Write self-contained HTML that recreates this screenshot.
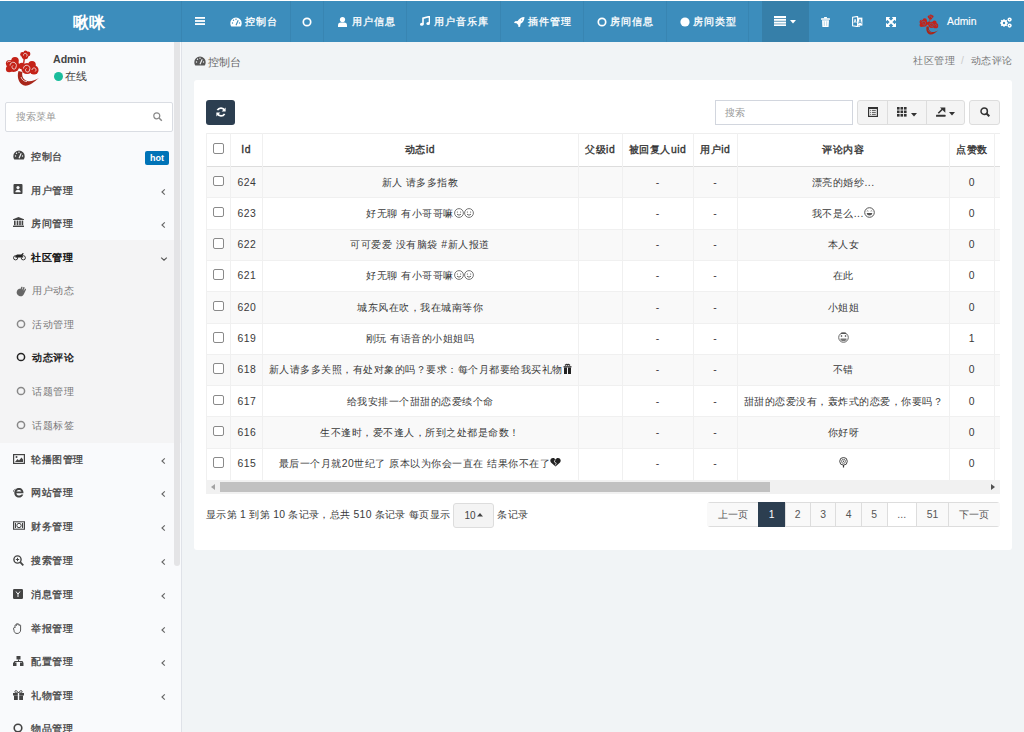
<!DOCTYPE html>
<html><head><meta charset="utf-8">
<style>
*{box-sizing:border-box;margin:0;padding:0}
html,body{width:1024px;height:732px;overflow:hidden;background:#f1f4f6;font-family:"Liberation Sans",sans-serif;color:#333}
.abs{position:absolute}
svg.abs{display:block}
#topline{position:absolute;left:0;top:0;width:1024px;height:1px;background:#fff}
#header{position:absolute;left:0;top:1px;width:1024px;height:41px;background:#3c8dbc;color:#fff;font-size:11.2px}
.nt{-webkit-text-stroke:0.3px #fff}
#logo{position:absolute;left:0;top:1px;width:178px;height:41px;text-align:center;line-height:41px;font-size:16px;font-weight:bold}
.sep{position:absolute;top:0;width:1px;height:41px;background:rgba(0,0,0,0.05)}
.nt{position:absolute;top:0;height:41px;line-height:41px;white-space:nowrap;font-size:10.4px;letter-spacing:0.9px}
#sidebar{position:absolute;left:0;top:42px;width:181px;height:690px;background:#f9fafc;overflow:hidden}
#sbborder{position:absolute;left:181px;top:42px;width:1px;height:690px;background:#dfe2e8}
#sbthumb{position:absolute;left:174px;top:42px;width:6px;height:524px;background:#e4e4e6;border-radius:0 0 4px 4px}
.mi{position:absolute;left:0;width:174px;height:34px;font-size:10.4px;letter-spacing:0.5px;color:#444;font-weight:normal;-webkit-text-stroke:0.3px #444;white-space:nowrap}
.mi .tx{position:absolute;left:31px;top:0.5px;line-height:34px}
.si{position:absolute;left:0;width:174px;height:34px;font-size:10.4px;letter-spacing:0.5px;color:#777;white-space:nowrap}
.si .tx{position:absolute;left:32px;top:0.7px;line-height:34px}
#panel{position:absolute;left:194px;top:80px;width:818px;height:470px;background:#fff;border-radius:3px}
.th{position:absolute;font-size:10.4px;letter-spacing:0.5px;color:#333;font-weight:normal;-webkit-text-stroke:0.35px #333;text-align:center;white-space:nowrap}
.td{position:absolute;font-size:10.4px;letter-spacing:0.5px;color:#3a3a3a;text-align:center;white-space:nowrap}
.cell{position:absolute;font-size:10.4px;color:#333;white-space:nowrap;text-align:center}
</style></head><body>
<div id="topline"></div>
<div id="header">
<div id="logo">啾咪</div>
<div class="sep" style="left:181px"></div>
<div class="sep" style="left:290px"></div>
<div class="sep" style="left:323px"></div>
<div class="sep" style="left:406px"></div>
<div class="sep" style="left:500px"></div>
<div class="sep" style="left:583px"></div>
<div class="sep" style="left:666px"></div>
<div class="sep" style="left:748px"></div>
<div class="abs" style="left:762px;top:0;width:47px;height:41px;background:#367fa9"></div>
<svg class="abs" style="left:194.5px;top:16.2px" width="10" height="8" viewBox="0 0 10 8" ><rect x="0" y="0" width="10" height="1.8" fill="#fff"/><rect x="0" y="3.1" width="10" height="1.8" fill="#fff"/><rect x="0" y="6.2" width="10" height="1.8" fill="#fff"/></svg>
<svg class="abs" style="left:230px;top:15.5px" width="12" height="10" viewBox="0 0 12 10" ><path d="M6 0.5A5.7 5.7 0 0 0 0.3 6.2c0 1.2.3 2.3 1 3.3h9.4c.7-1 1-2.1 1-3.3A5.7 5.7 0 0 0 6 0.5z" fill="#fff"/><path d="M6 8.2 8.2 3.2" stroke="#3c8dbc" stroke-width="1.1"/><circle cx="2.5" cy="6" r=".7" fill="#3c8dbc"/><circle cx="3.5" cy="3.3" r=".7" fill="#3c8dbc"/><circle cx="6" cy="2.2" r=".7" fill="#3c8dbc"/><circle cx="9.5" cy="6" r=".7" fill="#3c8dbc"/></svg>
<div class="nt" style="left:245px">控制台</div>
<svg class="abs" style="left:301.5px;top:15.5px" width="10" height="10" viewBox="0 0 10 10" ><circle cx="5" cy="5" r="3.7" fill="none" stroke="#fff" stroke-width="1.7"/></svg>
<svg class="abs" style="left:338.2px;top:15.6px" width="9" height="10" viewBox="0 0 9 10" ><circle cx="4.5" cy="2.6" r="2.6" fill="#fff"/><path d="M0 10V8.2C0 6.3 1.5 5.6 2.6 5.6h3.8C7.5 5.6 9 6.3 9 8.2V10z" fill="#fff"/></svg>
<div class="nt" style="left:352px">用户信息</div>
<svg class="abs" style="left:420px;top:15px" width="10" height="10" viewBox="0 0 10 10" ><path d="M3 8V2.2L9.5 0.5V7" stroke="#fff" stroke-width="1.6" fill="none"/><ellipse cx="1.8" cy="8.2" rx="1.8" ry="1.5" fill="#fff"/><ellipse cx="8.2" cy="7.4" rx="1.8" ry="1.5" fill="#fff"/></svg>
<div class="nt" style="left:434px">用户音乐库</div>
<svg class="abs" style="left:513.5px;top:15.5px" width="11" height="10" viewBox="0 0 11 10" ><path d="M10.5 0C7.2 0 5 1.8 3.7 3.9L1 4.3 0 6l2.5.3L4.2 8l.3 2.5 1.7-1L6.6 6.8C8.8 5.5 10.5 3.3 10.5 0z" fill="#fff"/><circle cx="7.6" cy="3" r=".6" fill="#3c8dbc"/></svg>
<div class="nt" style="left:528px">插件管理</div>
<svg class="abs" style="left:596.5px;top:15.5px" width="10" height="10" viewBox="0 0 10 10" ><circle cx="5" cy="5" r="3.7" fill="none" stroke="#fff" stroke-width="1.7"/></svg>
<div class="nt" style="left:610px">房间信息</div>
<svg class="abs" style="left:680px;top:15.5px" width="10" height="10" viewBox="0 0 10 10" ><circle cx="5" cy="5" r="4.6" fill="#fff"/></svg>
<div class="nt" style="left:693px">房间类型</div>
<svg class="abs" style="left:774px;top:15px" width="12" height="10" viewBox="0 0 12 10" ><rect x="0" y="0" width="12" height="2" fill="#fff"/><rect x="0" y="2.8" width="12" height="2" fill="#fff"/><rect x="0" y="5.6" width="12" height="2" fill="#fff"/><rect x="0" y="8.3" width="12" height="1.7" fill="#fff"/></svg>
<svg class="abs" style="left:790px;top:19px" width="6" height="4" viewBox="0 0 6 4" ><path d="M0 0H6L3 3.5z" fill="#fff"/></svg>
<svg class="abs" style="left:820.5px;top:15.5px" width="9" height="10" viewBox="0 0 9 10" ><rect x="0" y="1.2" width="9" height="1.5" rx=".5" fill="#fff"/><rect x="3" y="0" width="3" height="1.6" rx=".5" fill="#fff"/><path d="M1 3.2h7l-.4 6.8h-6.2z" fill="#fff"/><path d="M3.3 4.3v4.6M5.7 4.3v4.6" stroke="#3c8dbc" stroke-width=".6" opacity=".6"/></svg>
<svg class="abs" style="left:852px;top:15px" width="11" height="11" viewBox="0 0 11 11" ><path d="M0.6 1.2 5.6 0.4v10.2L0.6 9.8z" fill="none" stroke="#fff" stroke-width="1.1"/><path d="M5.6 1.6h4.8v8h-4.8z" fill="#fff"/><path d="M2 6.8 3.1 3.2 4.2 6.8M2.4 5.8h1.4" stroke="#fff" stroke-width=".8" fill="none"/><path d="M6.6 7.6 8 3.3 9.4 7.6M7 6.4h2" stroke="#3c8dbc" stroke-width=".8" fill="none"/><path d="M4 10.6h4" stroke="#fff" stroke-width=".8"/></svg>
<svg class="abs" style="left:885.5px;top:16px" width="10" height="10" viewBox="0 0 10 10" ><path d="M0 0H4.3L0 4.3zM10 0V4.3L5.7 0zM0 10V5.7L4.3 10zM10 10H5.7L10 5.7z" fill="#fff"/><path d="M1.5 1.5 8.5 8.5M8.5 1.5 1.5 8.5" stroke="#fff" stroke-width="1.9"/></svg>
<svg class="abs" style="left:919px;top:13px" width="20" height="21" viewBox="0 0 35 36" ><g fill="#c42218"><circle cx="20" cy="6" r="3.3"/><circle cx="17.5" cy="4.4" r="2.3"/><circle cx="23" cy="4" r="2.4"/><circle cx="20.5" cy="2.4" r="2"/><path d="M19.5 8.5C18.5 10 19.5 11.5 18.5 13" stroke="#c42218" stroke-width="1.4" fill="none"/><circle cx="8.5" cy="16" r="6"/><circle cx="4.5" cy="13.5" r="3.6"/><circle cx="10" cy="10.8" r="3.8"/><circle cx="4.2" cy="19" r="3.3"/><circle cx="22" cy="18.5" r="5.5"/><circle cx="29" cy="20" r="4.6"/><circle cx="27" cy="14.8" r="3.8"/><circle cx="17" cy="16" r="3.3"/><path d="M13.5 21C11.5 27 14 34 19 35.5 24 36.5 29 32 34 28 30 30 26 32 22 31 17.5 29.5 16.5 25 17.5 22z" fill="#a8261a"/></g><g fill="none" stroke="#3c8dbc" stroke-width=".9" opacity=".85"><path d="M5 15.5a3.2 3.2 0 1 1 6 1.5 2 2 0 1 1-3-1.6"/><path d="M18.5 18.5a3.2 3.2 0 1 1 6 1.5 2 2 0 1 1-3-1.6"/><path d="M18.5 5.5a1.8 1.8 0 1 1 3 1"/><path d="M27 20a2 2 0 1 1 3.2 1.5"/><path d="M16 27c1 3 3 4.5 6 4.5"/><path d="M2.5 12.5a2 2 0 0 1 3-1"/></g></svg>
<div class="nt" style="left:947px;font-size:10.4px;letter-spacing:0;-webkit-text-stroke:0.15px #fff">Admin</div>
<svg class="abs" style="left:1000px;top:16px" width="12" height="11" viewBox="0 0 12 11" ><g fill="#fff"><circle cx="4" cy="6" r="3.1"/><g stroke="#fff" stroke-width="1.5"><path d="M4 2.2v7.6M.2 6h7.6M1.3 3.3l5.4 5.4M1.3 8.7l5.4-5.4"/></g><circle cx="9.6" cy="2.6" r="2.1"/><circle cx="9.6" cy="8.6" r="2.1"/></g><circle cx="4" cy="6" r="1.2" fill="#3c8dbc"/><circle cx="9.6" cy="2.6" r=".6" fill="#3c8dbc"/><circle cx="9.6" cy="8.6" r=".6" fill="#3c8dbc"/></svg>
</div>
<div id="sidebar">
<div class="abs" style="left:0;top:198px;width:181px;height:203px;background:#f4f4f5"></div>
<svg class="abs" style="left:5px;top:8px" width="35" height="36" viewBox="0 0 35 36" ><g fill="#c42218"><circle cx="20" cy="6" r="3.3"/><circle cx="17.5" cy="4.4" r="2.3"/><circle cx="23" cy="4" r="2.4"/><circle cx="20.5" cy="2.4" r="2"/><path d="M19.5 8.5C18.5 10 19.5 11.5 18.5 13" stroke="#c42218" stroke-width="1.4" fill="none"/><circle cx="8.5" cy="16" r="6"/><circle cx="4.5" cy="13.5" r="3.6"/><circle cx="10" cy="10.8" r="3.8"/><circle cx="4.2" cy="19" r="3.3"/><circle cx="22" cy="18.5" r="5.5"/><circle cx="29" cy="20" r="4.6"/><circle cx="27" cy="14.8" r="3.8"/><circle cx="17" cy="16" r="3.3"/><path d="M13.5 21C11.5 27 14 34 19 35.5 24 36.5 29 32 34 28 30 30 26 32 22 31 17.5 29.5 16.5 25 17.5 22z" fill="#a8261a"/></g><g fill="none" stroke="#f9fafc" stroke-width=".9" opacity=".85"><path d="M5 15.5a3.2 3.2 0 1 1 6 1.5 2 2 0 1 1-3-1.6"/><path d="M18.5 18.5a3.2 3.2 0 1 1 6 1.5 2 2 0 1 1-3-1.6"/><path d="M18.5 5.5a1.8 1.8 0 1 1 3 1"/><path d="M27 20a2 2 0 1 1 3.2 1.5"/><path d="M16 27c1 3 3 4.5 6 4.5"/><path d="M2.5 12.5a2 2 0 0 1 3-1"/></g></svg>
<div class="abs" style="left:53px;top:10.5px;font-size:10.6px;font-weight:bold;color:#444">Admin</div>
<div class="abs" style="left:53.5px;top:29.8px;width:9px;height:9px;border-radius:50%;background:#1abc9c"></div>
<div class="abs" style="left:65px;top:27px;font-size:11.2px;color:#444">在线</div>
<div class="abs" style="left:5px;top:60px;width:168px;height:30px;background:#fff;border:1px solid #dadde3;border-radius:2px"></div>
<div class="abs" style="left:16px;top:68px;font-size:10.4px;color:#999">搜索菜单</div>
<svg class="abs" style="left:152.5px;top:70px" width="10" height="10" viewBox="0 0 10 10" ><circle cx="3.8" cy="3.8" r="3" fill="none" stroke="#888" stroke-width="1.2"/><path d="M6 6 8.8 8.8" stroke="#888" stroke-width="1.5"/></svg>
<div class="mi" style="top:97px"><div class="tx">控制台</div></div>
<svg class="abs" style="left:13px;top:108px" width="12" height="10" viewBox="0 0 12 10" ><path d="M6 0.5A5.7 5.7 0 0 0 0.3 6.2c0 1.2.3 2.3 1 3.3h9.4c.7-1 1-2.1 1-3.3A5.7 5.7 0 0 0 6 0.5z" fill="#444"/><path d="M6 8.2 8.2 3.2" stroke="#f9fafc" stroke-width="1.1"/><circle cx="2.5" cy="6" r=".7" fill="#f9fafc"/><circle cx="3.5" cy="3.3" r=".7" fill="#f9fafc"/><circle cx="6" cy="2.2" r=".7" fill="#f9fafc"/><circle cx="9.5" cy="6" r=".7" fill="#f9fafc"/></svg>
<div class="abs" style="left:145px;top:108.8px;width:24px;height:14px;background:#0073b7;color:#fff;font-size:9px;font-weight:bold;text-align:center;line-height:14px;border-radius:2px">hot</div>
<div class="mi" style="top:131px"><div class="tx">用户管理</div></div>
<svg class="abs" style="left:13px;top:142px" width="10" height="10" viewBox="0 0 10 10" ><rect x="0.5" y="0" width="9" height="10" rx="1" fill="#444"/><circle cx="5" cy="3.6" r="1.6" fill="#f9fafc"/><path d="M2.3 8.3c0-1.6 1.2-2.5 2.7-2.5s2.7.9 2.7 2.5z" fill="#f9fafc"/></svg>
<svg class="abs" style="left:160px;top:145.5px" width="6" height="8" viewBox="0 0 6 8" ><path d="M4.8 1.4 2 4 4.8 6.6" stroke="#666" stroke-width="1.15" fill="none"/></svg>
<div class="mi" style="top:164px"><div class="tx">房间管理</div></div>
<svg class="abs" style="left:13px;top:175px" width="11" height="10" viewBox="0 0 11 10" ><path d="M5.5 0 11 2.2V3H0V2.2z" fill="#444"/><rect x="1" y="3.6" width="1.6" height="4.6" fill="#444"/><rect x="3.7" y="3.6" width="1.6" height="4.6" fill="#444"/><rect x="6.2" y="3.6" width="1.6" height="4.6" fill="#444"/><rect x="8.6" y="3.6" width="1.6" height="4.6" fill="#444"/><rect x="0" y="8.6" width="11" height="1.4" fill="#444"/></svg>
<svg class="abs" style="left:160px;top:178.5px" width="6" height="8" viewBox="0 0 6 8" ><path d="M4.8 1.4 2 4 4.8 6.6" stroke="#666" stroke-width="1.15" fill="none"/></svg>
<div class="mi" style="top:198px;color:#111;-webkit-text-stroke:0.45px #111"><div class="tx">社区管理</div></div>
<svg class="abs" style="left:13px;top:209.5px" width="13" height="9" viewBox="0 0 13 9" ><circle cx="2.6" cy="5.8" r="2.1" fill="none" stroke="#222" stroke-width=".9"/><circle cx="10.3" cy="5.8" r="2.1" fill="none" stroke="#222" stroke-width=".9"/><path d="M2.2 4.2 4 2.4h4.2L9.8 1l1 .6L9.4 3.4 10.3 5.8 8.5 5.2 6.8 5.6H4.8L2.6 5.8z" fill="#222"/></svg>
<svg class="abs" style="left:159.5px;top:214px" width="8" height="6" viewBox="0 0 8 6" ><path d="M1.2 1.6 4 4.2 6.8 1.6" stroke="#555" stroke-width="1.15" fill="none"/></svg>
<div class="si" style="top:231px;color:#777;font-weight:normal"><div class="tx">用户动态</div></div>
<svg class="abs" style="left:16px;top:243.5px" width="11" height="11" viewBox="0 0 11 11" ><g transform="rotate(25 5.5 5.5)"><path d="M1.2 6.8C1.2 4.5 2.5 3.6 3.4 3.6V1.6C3.4.6 4.8.6 4.8 1.6V3.4h.6V1.2c0-1 1.4-1 1.4 0v2.3h.6V2c0-1 1.4-1 1.4 0v4.8C8.8 9.2 7.4 10.5 5.3 10.5 2.8 10.5 1.2 9.2 1.2 6.8z" fill="#666"/></g></svg>
<div class="si" style="top:265px;color:#777;font-weight:normal"><div class="tx">活动管理</div></div>
<svg class="abs" style="left:16px;top:277px" width="10" height="10" viewBox="0 0 10 10" ><circle cx="5" cy="5" r="3.6" fill="none" stroke="#888" stroke-width="1.5"/></svg>
<div class="si" style="top:298px;color:#222;font-weight:bold"><div class="tx">动态评论</div></div>
<svg class="abs" style="left:16px;top:310px" width="10" height="10" viewBox="0 0 10 10" ><circle cx="5" cy="5" r="3.6" fill="none" stroke="#222" stroke-width="1.5"/></svg>
<div class="si" style="top:332px;color:#777;font-weight:normal"><div class="tx">话题管理</div></div>
<svg class="abs" style="left:16px;top:344px" width="10" height="10" viewBox="0 0 10 10" ><circle cx="5" cy="5" r="3.6" fill="none" stroke="#888" stroke-width="1.5"/></svg>
<div class="si" style="top:366px;color:#777;font-weight:normal"><div class="tx">话题标签</div></div>
<svg class="abs" style="left:16px;top:378px" width="10" height="10" viewBox="0 0 10 10" ><circle cx="5" cy="5" r="3.6" fill="none" stroke="#888" stroke-width="1.5"/></svg>
<div class="mi" style="top:400px"><div class="tx">轮播图管理</div></div>
<svg class="abs" style="left:13px;top:412px" width="12" height="10" viewBox="0 0 12 10" ><rect x=".6" y=".6" width="10.8" height="8.8" fill="none" stroke="#444" stroke-width="1.2"/><path d="M2 8 4.5 5l1.5 1.5L8.5 3.5 10 5.5V8z" fill="#444"/><circle cx="3.5" cy="3" r="1" fill="#444"/></svg>
<svg class="abs" style="left:160px;top:415px" width="6" height="8" viewBox="0 0 6 8" ><path d="M4.8 1.4 2 4 4.8 6.6" stroke="#666" stroke-width="1.15" fill="none"/></svg>
<div class="mi" style="top:433px"><div class="tx">网站管理</div></div>
<svg class="abs" style="left:13px;top:445px" width="11" height="11" viewBox="0 0 11 11" ><path d="M10.5 6.2H3.4C3.5 7.8 4.6 8.6 6 8.6 7 8.6 7.9 8.1 8.4 7.4H10.3C9.6 9.3 7.9 10.6 6 10.6 3.3 10.6 1.3 8.5 1.3 5.8 1.3 3.1 3.3 1 6 1 8.7 1 10.6 3 10.5 6.2zM3.5 4.6H8.4C8.2 3.5 7.3 2.9 6 2.9 4.7 2.9 3.8 3.5 3.5 4.6z" fill="#444"/><path d="M2.5 2.2C0 3 -.5 5.5.8 4.2" stroke="#444" stroke-width=".7" fill="none"/></svg>
<svg class="abs" style="left:160px;top:448px" width="6" height="8" viewBox="0 0 6 8" ><path d="M4.8 1.4 2 4 4.8 6.6" stroke="#666" stroke-width="1.15" fill="none"/></svg>
<div class="mi" style="top:467px"><div class="tx">财务管理</div></div>
<svg class="abs" style="left:13px;top:479px" width="12" height="9" viewBox="0 0 12 9" ><rect x=".5" y=".8" width="11" height="7.4" fill="none" stroke="#444" stroke-width="1.1"/><circle cx="6" cy="4.5" r="2.2" fill="none" stroke="#444" stroke-width="1"/><rect x="1.8" y="2" width="1.2" height="5" fill="#444"/><rect x="9" y="2" width="1.2" height="5" fill="#444"/></svg>
<svg class="abs" style="left:160px;top:482px" width="6" height="8" viewBox="0 0 6 8" ><path d="M4.8 1.4 2 4 4.8 6.6" stroke="#666" stroke-width="1.15" fill="none"/></svg>
<div class="mi" style="top:501px"><div class="tx">搜索管理</div></div>
<svg class="abs" style="left:13px;top:513px" width="11" height="11" viewBox="0 0 11 11" ><circle cx="4.5" cy="4.5" r="3.6" fill="none" stroke="#444" stroke-width="1.4"/><path d="M7.2 7.2 10.3 10.3" stroke="#444" stroke-width="1.8"/><path d="M4.5 2.8v3.4M2.8 4.5h3.4" stroke="#444" stroke-width="1"/></svg>
<svg class="abs" style="left:160px;top:516px" width="6" height="8" viewBox="0 0 6 8" ><path d="M4.8 1.4 2 4 4.8 6.6" stroke="#666" stroke-width="1.15" fill="none"/></svg>
<div class="mi" style="top:535px"><div class="tx">消息管理</div></div>
<svg class="abs" style="left:13px;top:547px" width="10" height="10" viewBox="0 0 10 10" ><rect x="0" y="0" width="10" height="10" rx="1.2" fill="#444"/><path d="M3 2.5 5 5.2 7 2.5M5 5.2V8" stroke="#f9fafc" stroke-width="1" fill="none"/></svg>
<svg class="abs" style="left:160px;top:550px" width="6" height="8" viewBox="0 0 6 8" ><path d="M4.8 1.4 2 4 4.8 6.6" stroke="#666" stroke-width="1.15" fill="none"/></svg>
<div class="mi" style="top:569px"><div class="tx">举报管理</div></div>
<svg class="abs" style="left:13px;top:581px" width="10" height="11" viewBox="0 0 10 11" ><path d="M2 5V2.5c0-.9 1.4-.9 1.4 0V1.2c0-.9 1.4-.9 1.4 0v.5c0-.9 1.4-.9 1.4 0v.8c0-.9 1.4-.9 1.4 0V7c0 2-1.5 3.5-3.5 3.5S1 9 1 7.3L.5 5.5C.3 4.6 1.7 4.3 2 5z" fill="none" stroke="#444" stroke-width=".9"/></svg>
<svg class="abs" style="left:160px;top:584px" width="6" height="8" viewBox="0 0 6 8" ><path d="M4.8 1.4 2 4 4.8 6.6" stroke="#666" stroke-width="1.15" fill="none"/></svg>
<div class="mi" style="top:602px"><div class="tx">配置管理</div></div>
<svg class="abs" style="left:13px;top:614px" width="11" height="10" viewBox="0 0 11 10" ><rect x="3.5" y="0" width="4" height="3.5" fill="#444"/><path d="M5.5 3.5V5.5M1.5 7V5.5h8V7" stroke="#444" stroke-width="1" fill="none"/><rect x="0" y="6.5" width="3.5" height="3.5" fill="#444"/><rect x="7" y="6.5" width="3.5" height="3.5" fill="#444"/></svg>
<svg class="abs" style="left:160px;top:617px" width="6" height="8" viewBox="0 0 6 8" ><path d="M4.8 1.4 2 4 4.8 6.6" stroke="#666" stroke-width="1.15" fill="none"/></svg>
<div class="mi" style="top:636px"><div class="tx">礼物管理</div></div>
<svg class="abs" style="left:13px;top:648px" width="11" height="10" viewBox="0 0 11 10" ><rect x="0" y="3" width="11" height="2.5" fill="#444"/><rect x="1" y="5.5" width="9" height="4.5" fill="#444"/><path d="M5.5 3C4 0 1.5 0 2 2.2 2.3 3 4 3 5.5 3 7 3 8.7 3 9 2.2 9.5 0 7 0 5.5 3z" fill="none" stroke="#444" stroke-width="1"/><rect x="4.8" y="3" width="1.4" height="7" fill="#f9fafc"/></svg>
<svg class="abs" style="left:160px;top:651px" width="6" height="8" viewBox="0 0 6 8" ><path d="M4.8 1.4 2 4 4.8 6.6" stroke="#666" stroke-width="1.15" fill="none"/></svg>
<div class="mi" style="top:669px"><div class="tx">物品管理</div></div>
<svg class="abs" style="left:13px;top:681px" width="10" height="10" viewBox="0 0 10 10" ><circle cx="5" cy="5" r="3.8" fill="none" stroke="#444" stroke-width="1.6"/></svg>
</div>
<div id="sbthumb"></div>
<div id="sbborder"></div>
<div id="panel"></div>
<svg class="abs" style="left:194px;top:56px" width="12" height="10" viewBox="0 0 12 10" ><path d="M6 0.5A5.7 5.7 0 0 0 0.3 6.2c0 1.2.3 2.3 1 3.3h9.4c.7-1 1-2.1 1-3.3A5.7 5.7 0 0 0 6 0.5z" fill="#555"/><path d="M6 8.2 8.2 3.2" stroke="#f1f4f6" stroke-width="1.1"/><circle cx="2.5" cy="6" r=".7" fill="#f1f4f6"/><circle cx="3.5" cy="3.3" r=".7" fill="#f1f4f6"/><circle cx="6" cy="2.2" r=".7" fill="#f1f4f6"/><circle cx="9.5" cy="6" r=".7" fill="#f1f4f6"/></svg>
<div class="abs" style="left:207.5px;top:54.5px;font-size:11.2px;color:#666;line-height:14px">控制台</div>
<div class="abs" style="left:850px;top:54px;width:162.5px;text-align:right;font-size:10.4px;letter-spacing:0.5px;color:#777;line-height:14px;white-space:nowrap">社区管理<span style="color:#ccc;padding:0 6px 0 6px">/</span>动态评论</div>
<div class="abs" style="left:206px;top:100px;width:29px;height:25px;background:#2c3e50;border-radius:3px"></div>
<svg class="abs" style="left:216px;top:107px" width="10" height="10" viewBox="0 0 10 10" ><path d="M8.6 3.6A4 4 0 0 0 1.4 3.2" stroke="#fff" stroke-width="1.7" fill="none"/><path d="M9.6 0.4V4.4H5.6z" fill="#fff"/><path d="M1.4 6.4A4 4 0 0 0 8.6 6.8" stroke="#fff" stroke-width="1.7" fill="none"/><path d="M0.4 9.6V5.6H4.4z" fill="#fff"/></svg>
<div class="abs" style="left:715px;top:100px;width:138px;height:25px;border:1px solid #d2d6de;background:#fff"></div>
<div class="abs" style="left:725px;top:106px;font-size:10.4px;color:#999;line-height:13px">搜索</div>
<div class="abs" style="left:857px;top:100px;width:108px;height:25px;border:1px solid #ddd;background:#f4f4f4;border-radius:3px"></div>
<div class="abs" style="left:887px;top:101px;width:1px;height:23px;background:#ddd"></div>
<div class="abs" style="left:926px;top:101px;width:1px;height:23px;background:#ddd"></div>
<div class="abs" style="left:969px;top:100px;width:31px;height:25px;border:1px solid #ddd;background:#f4f4f4;border-radius:3px"></div>
<svg class="abs" style="left:868px;top:106.5px" width="10" height="10" viewBox="0 0 10 10" ><rect x=".6" y=".6" width="8.8" height="8.8" fill="none" stroke="#333" stroke-width="1.2"/><rect x="0" y="0" width="10" height="2" fill="#333"/><path d="M2.2 3.4h.9M4 3.4h3.8M2.2 5.4h.9M4 5.4h3.8M2.2 7.4h.9M4 7.4h3.8" stroke="#333" stroke-width=".8"/></svg>
<svg class="abs" style="left:897px;top:107px" width="10" height="10" viewBox="0 0 10 10" ><rect x="0.0" y="0.0" width="2.6" height="2.6" fill="#333"/><rect x="0.0" y="3.5" width="2.6" height="2.6" fill="#333"/><rect x="0.0" y="7.0" width="2.6" height="2.6" fill="#333"/><rect x="3.5" y="0.0" width="2.6" height="2.6" fill="#333"/><rect x="3.5" y="3.5" width="2.6" height="2.6" fill="#333"/><rect x="3.5" y="7.0" width="2.6" height="2.6" fill="#333"/><rect x="7.0" y="0.0" width="2.6" height="2.6" fill="#333"/><rect x="7.0" y="3.5" width="2.6" height="2.6" fill="#333"/><rect x="7.0" y="7.0" width="2.6" height="2.6" fill="#333"/></svg>
<svg class="abs" style="left:910.5px;top:112.5px" width="6" height="4" viewBox="0 0 6 4" ><path d="M0 0H6L3 3.5z" fill="#333"/></svg>
<svg class="abs" style="left:936px;top:106.5px" width="10" height="10" viewBox="0 0 10 10" ><rect x="0" y="7.8" width="9.5" height="2" rx=".4" fill="#333"/><path d="M2.3 6.3 6.8 1.8" stroke="#333" stroke-width="1.6"/><path d="M4 0.5H9.3V5.8z" fill="#333"/></svg>
<svg class="abs" style="left:949px;top:111.5px" width="6" height="4" viewBox="0 0 6 4" ><path d="M0 0H6L3 3.5z" fill="#333"/></svg>
<svg class="abs" style="left:980px;top:107px" width="10" height="10" viewBox="0 0 10 10" ><circle cx="4.2" cy="4.2" r="3.2" fill="none" stroke="#333" stroke-width="1.5"/><path d="M6.5 6.5 9.3 9.3" stroke="#333" stroke-width="2"/></svg>
<div class="abs" style="left:206px;top:133px;width:794px;height:362px;overflow:hidden">
<div class="abs" style="left:0;top:33.5px;width:800px;height:31.3px;background:#f9f9f9"></div>
<div class="abs" style="left:0;top:64.80000000000001px;width:800px;height:31.3px;background:#fff"></div>
<div class="abs" style="left:0;top:96.1px;width:800px;height:31.3px;background:#f9f9f9"></div>
<div class="abs" style="left:0;top:127.39999999999998px;width:800px;height:31.3px;background:#fff"></div>
<div class="abs" style="left:0;top:158.7px;width:800px;height:31.3px;background:#f9f9f9"></div>
<div class="abs" style="left:0;top:190.0px;width:800px;height:31.3px;background:#fff"></div>
<div class="abs" style="left:0;top:221.3px;width:800px;height:31.3px;background:#f9f9f9"></div>
<div class="abs" style="left:0;top:252.60000000000002px;width:800px;height:31.3px;background:#fff"></div>
<div class="abs" style="left:0;top:283.9px;width:800px;height:31.3px;background:#f9f9f9"></div>
<div class="abs" style="left:0;top:315.2px;width:800px;height:31.3px;background:#fff"></div>
<div class="abs" style="left:0;top:0;width:800px;height:1px;background:#eee"></div>
<div class="abs" style="left:0;top:32.5px;width:800px;height:1px;background:#ddd"></div>
<div class="abs" style="left:0;top:64.30000000000001px;width:800px;height:1px;background:#f0f0f0"></div>
<div class="abs" style="left:0;top:95.6px;width:800px;height:1px;background:#f0f0f0"></div>
<div class="abs" style="left:0;top:126.89999999999998px;width:800px;height:1px;background:#f0f0f0"></div>
<div class="abs" style="left:0;top:158.2px;width:800px;height:1px;background:#f0f0f0"></div>
<div class="abs" style="left:0;top:189.5px;width:800px;height:1px;background:#f0f0f0"></div>
<div class="abs" style="left:0;top:220.8px;width:800px;height:1px;background:#f0f0f0"></div>
<div class="abs" style="left:0;top:252.10000000000002px;width:800px;height:1px;background:#f0f0f0"></div>
<div class="abs" style="left:0;top:283.4px;width:800px;height:1px;background:#f0f0f0"></div>
<div class="abs" style="left:0;top:314.7px;width:800px;height:1px;background:#f0f0f0"></div>
<div class="abs" style="left:0.0px;top:0;width:1px;height:347px;background:#f0f0f0"></div>
<div class="abs" style="left:23.900000000000006px;top:0;width:1px;height:347px;background:#f0f0f0"></div>
<div class="abs" style="left:55.5px;top:0;width:1px;height:347px;background:#f0f0f0"></div>
<div class="abs" style="left:371.5px;top:0;width:1px;height:347px;background:#f0f0f0"></div>
<div class="abs" style="left:415.79999999999995px;top:0;width:1px;height:347px;background:#f0f0f0"></div>
<div class="abs" style="left:486.5px;top:0;width:1px;height:347px;background:#f0f0f0"></div>
<div class="abs" style="left:531.1px;top:0;width:1px;height:347px;background:#f0f0f0"></div>
<div class="abs" style="left:742.5px;top:0;width:1px;height:347px;background:#f0f0f0"></div>
<div class="abs" style="left:788.1px;top:0;width:1px;height:347px;background:#f0f0f0"></div>
<div class="abs" style="left:7px;top:10px;width:10.5px;height:10.5px;border:1px solid #8a8a8a;border-radius:2px;background:#fff"></div>
<div class="abs th" style="left:24.400000000000006px;top:0.3px;width:31.599999999999994px;height:33px;line-height:33px">Id</div>
<div class="abs th" style="left:56px;top:0.3px;width:316px;height:33px;line-height:33px">动态id</div>
<div class="abs th" style="left:372px;top:0.3px;width:44.299999999999955px;height:33px;line-height:33px">父级id</div>
<div class="abs th" style="left:416.29999999999995px;top:0.3px;width:70.70000000000005px;height:33px;line-height:33px">被回复人uid</div>
<div class="abs th" style="left:487px;top:0.3px;width:44.60000000000002px;height:33px;line-height:33px">用户id</div>
<div class="abs th" style="left:531.6px;top:0.3px;width:211.39999999999998px;height:33px;line-height:33px">评论内容</div>
<div class="abs th" style="left:743px;top:0.3px;width:45.60000000000002px;height:33px;line-height:33px">点赞数</div>
<div class="abs" style="left:7px;top:42.5px;width:10.5px;height:10.5px;border:1px solid #8a8a8a;border-radius:2px;background:#fff"></div>
<div class="abs td" style="left:31.400000000000006px;top:33.5px;line-height:31.3px;text-align:left">624</div>
<div class="abs td" style="left:56px;top:33.5px;width:316px;line-height:31.3px">新人 请多多指教</div>
<div class="abs td" style="left:416.29999999999995px;top:33.5px;width:70.70000000000005px;line-height:31.3px">-</div>
<div class="abs td" style="left:487px;top:33.5px;width:44.60000000000002px;line-height:31.3px">-</div>
<div class="abs td" style="left:531.6px;top:33.5px;width:211.39999999999998px;line-height:31.3px">漂亮的婚纱...</div>
<div class="abs td" style="left:743px;top:33.5px;width:45.60000000000002px;line-height:31.3px">0</div>
<div class="abs" style="left:7px;top:73.80000000000001px;width:10.5px;height:10.5px;border:1px solid #8a8a8a;border-radius:2px;background:#fff"></div>
<div class="abs td" style="left:31.400000000000006px;top:64.80000000000001px;line-height:31.3px;text-align:left">623</div>
<div class="abs td" style="left:56px;top:64.80000000000001px;width:316px;line-height:31.3px">好无聊 有小哥哥嘛<svg width="10" height="10" viewBox="0 0 10 10" style="display:inline-block;vertical-align:-1px"><circle cx="5" cy="5" r="4.4" fill="none" stroke="#666" stroke-width=".9"/><circle cx="3.4" cy="4" r=".6" fill="#555"/><circle cx="6.6" cy="4" r=".6" fill="#555"/><path d="M3 6.2Q5 8.2 7 6.2" stroke="#555" stroke-width=".9" fill="none"/></svg><svg width="10" height="10" viewBox="0 0 10 10" style="display:inline-block;vertical-align:-1px"><circle cx="5" cy="5" r="4.4" fill="none" stroke="#666" stroke-width=".9"/><circle cx="3.4" cy="4" r=".6" fill="#555"/><circle cx="6.6" cy="4" r=".6" fill="#555"/><path d="M3 6.2Q5 8.2 7 6.2" stroke="#555" stroke-width=".9" fill="none"/></svg></div>
<div class="abs td" style="left:416.29999999999995px;top:64.80000000000001px;width:70.70000000000005px;line-height:31.3px">-</div>
<div class="abs td" style="left:487px;top:64.80000000000001px;width:44.60000000000002px;line-height:31.3px">-</div>
<div class="abs td" style="left:531.6px;top:64.80000000000001px;width:211.39999999999998px;line-height:31.3px">我不是么...<svg width="11" height="11" viewBox="0 0 11 11" style="display:inline-block;vertical-align:-1px"><circle cx="5.5" cy="5.5" r="4.8" fill="none" stroke="#555" stroke-width="1"/><path d="M2.8 4.2Q3.6 3.4 4.4 4.2M6.6 4.2Q7.4 3.4 8.2 4.2" stroke="#666" stroke-width=".8" fill="none"/><path d="M2.6 6h5.8Q8 8.6 5.5 8.6 3 8.6 2.6 6z" fill="#555"/></svg></div>
<div class="abs td" style="left:743px;top:64.80000000000001px;width:45.60000000000002px;line-height:31.3px">0</div>
<div class="abs" style="left:7px;top:105.1px;width:10.5px;height:10.5px;border:1px solid #8a8a8a;border-radius:2px;background:#fff"></div>
<div class="abs td" style="left:31.400000000000006px;top:96.1px;line-height:31.3px;text-align:left">622</div>
<div class="abs td" style="left:56px;top:96.1px;width:316px;line-height:31.3px">可可爱爱 没有脑袋 #新人报道</div>
<div class="abs td" style="left:416.29999999999995px;top:96.1px;width:70.70000000000005px;line-height:31.3px">-</div>
<div class="abs td" style="left:487px;top:96.1px;width:44.60000000000002px;line-height:31.3px">-</div>
<div class="abs td" style="left:531.6px;top:96.1px;width:211.39999999999998px;line-height:31.3px">本人女</div>
<div class="abs td" style="left:743px;top:96.1px;width:45.60000000000002px;line-height:31.3px">0</div>
<div class="abs" style="left:7px;top:136.39999999999998px;width:10.5px;height:10.5px;border:1px solid #8a8a8a;border-radius:2px;background:#fff"></div>
<div class="abs td" style="left:31.400000000000006px;top:127.39999999999998px;line-height:31.3px;text-align:left">621</div>
<div class="abs td" style="left:56px;top:127.39999999999998px;width:316px;line-height:31.3px">好无聊 有小哥哥嘛<svg width="10" height="10" viewBox="0 0 10 10" style="display:inline-block;vertical-align:-1px"><circle cx="5" cy="5" r="4.4" fill="none" stroke="#666" stroke-width=".9"/><circle cx="3.4" cy="4" r=".6" fill="#555"/><circle cx="6.6" cy="4" r=".6" fill="#555"/><path d="M3 6.2Q5 8.2 7 6.2" stroke="#555" stroke-width=".9" fill="none"/></svg><svg width="10" height="10" viewBox="0 0 10 10" style="display:inline-block;vertical-align:-1px"><circle cx="5" cy="5" r="4.4" fill="none" stroke="#666" stroke-width=".9"/><circle cx="3.4" cy="4" r=".6" fill="#555"/><circle cx="6.6" cy="4" r=".6" fill="#555"/><path d="M3 6.2Q5 8.2 7 6.2" stroke="#555" stroke-width=".9" fill="none"/></svg></div>
<div class="abs td" style="left:416.29999999999995px;top:127.39999999999998px;width:70.70000000000005px;line-height:31.3px">-</div>
<div class="abs td" style="left:487px;top:127.39999999999998px;width:44.60000000000002px;line-height:31.3px">-</div>
<div class="abs td" style="left:531.6px;top:127.39999999999998px;width:211.39999999999998px;line-height:31.3px">在此</div>
<div class="abs td" style="left:743px;top:127.39999999999998px;width:45.60000000000002px;line-height:31.3px">0</div>
<div class="abs" style="left:7px;top:167.7px;width:10.5px;height:10.5px;border:1px solid #8a8a8a;border-radius:2px;background:#fff"></div>
<div class="abs td" style="left:31.400000000000006px;top:158.7px;line-height:31.3px;text-align:left">620</div>
<div class="abs td" style="left:56px;top:158.7px;width:316px;line-height:31.3px">城东风在吹，我在城南等你</div>
<div class="abs td" style="left:416.29999999999995px;top:158.7px;width:70.70000000000005px;line-height:31.3px">-</div>
<div class="abs td" style="left:487px;top:158.7px;width:44.60000000000002px;line-height:31.3px">-</div>
<div class="abs td" style="left:531.6px;top:158.7px;width:211.39999999999998px;line-height:31.3px">小姐姐</div>
<div class="abs td" style="left:743px;top:158.7px;width:45.60000000000002px;line-height:31.3px">0</div>
<div class="abs" style="left:7px;top:199.0px;width:10.5px;height:10.5px;border:1px solid #8a8a8a;border-radius:2px;background:#fff"></div>
<div class="abs td" style="left:31.400000000000006px;top:190.0px;line-height:31.3px;text-align:left">619</div>
<div class="abs td" style="left:56px;top:190.0px;width:316px;line-height:31.3px">刚玩 有语音的小姐姐吗</div>
<div class="abs td" style="left:416.29999999999995px;top:190.0px;width:70.70000000000005px;line-height:31.3px">-</div>
<div class="abs td" style="left:487px;top:190.0px;width:44.60000000000002px;line-height:31.3px">-</div>
<div class="abs td" style="left:531.6px;top:190.0px;width:211.39999999999998px;line-height:31.3px"><svg width="11" height="11" viewBox="0 0 11 11" style="display:inline-block;vertical-align:-1px"><circle cx="5.5" cy="5.5" r="4.8" fill="none" stroke="#666" stroke-width="1"/><rect x="3" y="0.8" width="5" height="1.2" fill="#555"/><circle cx="3.5" cy="4" r=".8" fill="#333"/><circle cx="7.5" cy="4" r=".8" fill="#333"/><path d="M2.5 6.5h6v1.5Q5.5 10.5 2.5 8z" fill="#777"/></svg></div>
<div class="abs td" style="left:743px;top:190.0px;width:45.60000000000002px;line-height:31.3px">1</div>
<div class="abs" style="left:7px;top:230.3px;width:10.5px;height:10.5px;border:1px solid #8a8a8a;border-radius:2px;background:#fff"></div>
<div class="abs td" style="left:31.400000000000006px;top:221.3px;line-height:31.3px;text-align:left">618</div>
<div class="abs td" style="left:56px;top:221.3px;width:316px;line-height:31.3px">新人请多多关照，有处对象的吗？要求：每个月都要给我买礼物<svg width="9" height="11" viewBox="0 0 9 11" style="display:inline-block;vertical-align:-1px"><path d="M2 2.5Q4.5 0 4.5 2.8 4.5 0 7 2.5" stroke="#333" stroke-width="1.2" fill="none"/><rect x="0.5" y="3" width="8" height="1.5" fill="#555"/><rect x="1" y="4.5" width="3" height="6.5" fill="#222"/><rect x="5" y="4.5" width="3" height="6.5" fill="#222"/></svg></div>
<div class="abs td" style="left:416.29999999999995px;top:221.3px;width:70.70000000000005px;line-height:31.3px">-</div>
<div class="abs td" style="left:487px;top:221.3px;width:44.60000000000002px;line-height:31.3px">-</div>
<div class="abs td" style="left:531.6px;top:221.3px;width:211.39999999999998px;line-height:31.3px">不错</div>
<div class="abs td" style="left:743px;top:221.3px;width:45.60000000000002px;line-height:31.3px">0</div>
<div class="abs" style="left:7px;top:261.6px;width:10.5px;height:10.5px;border:1px solid #8a8a8a;border-radius:2px;background:#fff"></div>
<div class="abs td" style="left:31.400000000000006px;top:252.60000000000002px;line-height:31.3px;text-align:left">617</div>
<div class="abs td" style="left:56px;top:252.60000000000002px;width:316px;line-height:31.3px">给我安排一个甜甜的恋爱续个命</div>
<div class="abs td" style="left:416.29999999999995px;top:252.60000000000002px;width:70.70000000000005px;line-height:31.3px">-</div>
<div class="abs td" style="left:487px;top:252.60000000000002px;width:44.60000000000002px;line-height:31.3px">-</div>
<div class="abs td" style="left:531.6px;top:252.60000000000002px;width:211.39999999999998px;line-height:31.3px">甜甜的恋爱没有，轰炸式的恋爱，你要吗？</div>
<div class="abs td" style="left:743px;top:252.60000000000002px;width:45.60000000000002px;line-height:31.3px">0</div>
<div class="abs" style="left:7px;top:292.9px;width:10.5px;height:10.5px;border:1px solid #8a8a8a;border-radius:2px;background:#fff"></div>
<div class="abs td" style="left:31.400000000000006px;top:283.9px;line-height:31.3px;text-align:left">616</div>
<div class="abs td" style="left:56px;top:283.9px;width:316px;line-height:31.3px">生不逢时，爱不逢人，所到之处都是命数！</div>
<div class="abs td" style="left:416.29999999999995px;top:283.9px;width:70.70000000000005px;line-height:31.3px">-</div>
<div class="abs td" style="left:487px;top:283.9px;width:44.60000000000002px;line-height:31.3px">-</div>
<div class="abs td" style="left:531.6px;top:283.9px;width:211.39999999999998px;line-height:31.3px">你好呀</div>
<div class="abs td" style="left:743px;top:283.9px;width:45.60000000000002px;line-height:31.3px">0</div>
<div class="abs" style="left:7px;top:324.2px;width:10.5px;height:10.5px;border:1px solid #8a8a8a;border-radius:2px;background:#fff"></div>
<div class="abs td" style="left:31.400000000000006px;top:315.2px;line-height:31.3px;text-align:left">615</div>
<div class="abs td" style="left:56px;top:315.2px;width:316px;line-height:31.3px">最后一个月就20世纪了 原本以为你会一直在 结果你不在了<svg width="11" height="9" viewBox="0 0 11 9" style="display:inline-block;vertical-align:0px"><path d="M5.5 8.6 1 4.4C-.5 2.8.5 0 3 0c1.2 0 2 .7 2.5 1.4C6 .7 6.8 0 8 0c2.5 0 3.5 2.8 2 4.4z" fill="#222"/><path d="M5.2 1.6 4.3 4 6.3 5 5.2 7.5" stroke="#f9f9f9" stroke-width=".7" fill="none"/></svg></div>
<div class="abs td" style="left:416.29999999999995px;top:315.2px;width:70.70000000000005px;line-height:31.3px">-</div>
<div class="abs td" style="left:487px;top:315.2px;width:44.60000000000002px;line-height:31.3px">-</div>
<div class="abs td" style="left:531.6px;top:315.2px;width:211.39999999999998px;line-height:31.3px"><svg width="9" height="11" viewBox="0 0 9 11" style="display:inline-block;vertical-align:-1px"><circle cx="4.5" cy="4.3" r="3.8" fill="none" stroke="#444" stroke-width="1"/><circle cx="4.5" cy="4.3" r="2" fill="none" stroke="#666" stroke-width=".9"/><circle cx="4.5" cy="4.3" r=".7" fill="#444"/><path d="M4.5 8.1V10.5" stroke="#333" stroke-width="1.2"/></svg></div>
<div class="abs td" style="left:743px;top:315.2px;width:45.60000000000002px;line-height:31.3px">0</div>
<div class="abs" style="left:0;top:346.5px;width:794px;height:14px;background:#f1f1f1"></div>
<div class="abs" style="left:14px;top:348.7px;width:550px;height:10px;background:#c1c1c1"></div>
<svg class="abs" style="left:5px;top:351.0px" width="4" height="6" viewBox="0 0 4 6" ><path d="M4 0V6L0 3z" fill="#a3a3a3"/></svg>
<svg class="abs" style="left:785px;top:351.0px" width="4" height="6" viewBox="0 0 4 6" ><path d="M0 0V6L4 3z" fill="#505050"/></svg>
</div>
<div class="abs" style="left:206px;top:508px;font-size:10.4px;letter-spacing:0.3px;color:#3a3a3a;line-height:13px;white-space:nowrap">显示第 1 到第 10 条记录，总共 510 条记录 每页显示</div>
<div class="abs" style="left:453px;top:503px;width:40.5px;height:25px;border:1px solid #ddd;background:#f4f4f4;border-radius:3px"></div>
<div class="abs" style="left:464.5px;top:509px;font-size:10px;color:#444;line-height:13px">10</div>
<svg class="abs" style="left:477px;top:513px" width="6" height="4" viewBox="0 0 6 4" ><path d="M0 3.5H6L3 0z" fill="#444"/></svg>
<div class="abs" style="left:497px;top:508px;font-size:10.4px;letter-spacing:0.5px;color:#3a3a3a;line-height:13px">条记录</div>
<div class="abs" style="left:707px;top:502px;width:293px;height:25px;border:1px solid #ddd;border-radius:3px;background:#f9f9f9"></div>
<div class="abs" style="left:707px;top:503px;width:51.299999999999955px;height:23px;background:#f9f9f9;color:#555;font-size:10.4px;text-align:center;line-height:23px">上一页</div>
<div class="abs" style="left:758.3px;top:502px;width:26.700000000000045px;height:25px;background:#2c3e50;color:#fff;font-size:10.4px;text-align:center;line-height:25px">1</div>
<div class="abs" style="left:785px;top:503px;width:25.5px;height:23px;background:#f9f9f9;color:#555;font-size:10.4px;text-align:center;line-height:23px">2</div>
<div class="abs" style="left:784.5px;top:502px;width:1px;height:25px;background:#ddd"></div>
<div class="abs" style="left:810.5px;top:503px;width:25.299999999999955px;height:23px;background:#f9f9f9;color:#555;font-size:10.4px;text-align:center;line-height:23px">3</div>
<div class="abs" style="left:810.0px;top:502px;width:1px;height:25px;background:#ddd"></div>
<div class="abs" style="left:835.8px;top:503px;width:25.600000000000023px;height:23px;background:#f9f9f9;color:#555;font-size:10.4px;text-align:center;line-height:23px">4</div>
<div class="abs" style="left:835.3px;top:502px;width:1px;height:25px;background:#ddd"></div>
<div class="abs" style="left:861.4px;top:503px;width:25.600000000000023px;height:23px;background:#f9f9f9;color:#555;font-size:10.4px;text-align:center;line-height:23px">5</div>
<div class="abs" style="left:860.9px;top:502px;width:1px;height:25px;background:#ddd"></div>
<div class="abs" style="left:887px;top:503px;width:29.399999999999977px;height:23px;background:#fff;color:#555;font-size:10.4px;text-align:center;line-height:23px">...</div>
<div class="abs" style="left:886.5px;top:502px;width:1px;height:25px;background:#ddd"></div>
<div class="abs" style="left:916.4px;top:503px;width:32.200000000000045px;height:23px;background:#f9f9f9;color:#555;font-size:10.4px;text-align:center;line-height:23px">51</div>
<div class="abs" style="left:915.9px;top:502px;width:1px;height:25px;background:#ddd"></div>
<div class="abs" style="left:948.6px;top:503px;width:51.19999999999993px;height:23px;background:#f9f9f9;color:#555;font-size:10.4px;text-align:center;line-height:23px">下一页</div>
<div class="abs" style="left:948.1px;top:502px;width:1px;height:25px;background:#ddd"></div>
</body></html>
